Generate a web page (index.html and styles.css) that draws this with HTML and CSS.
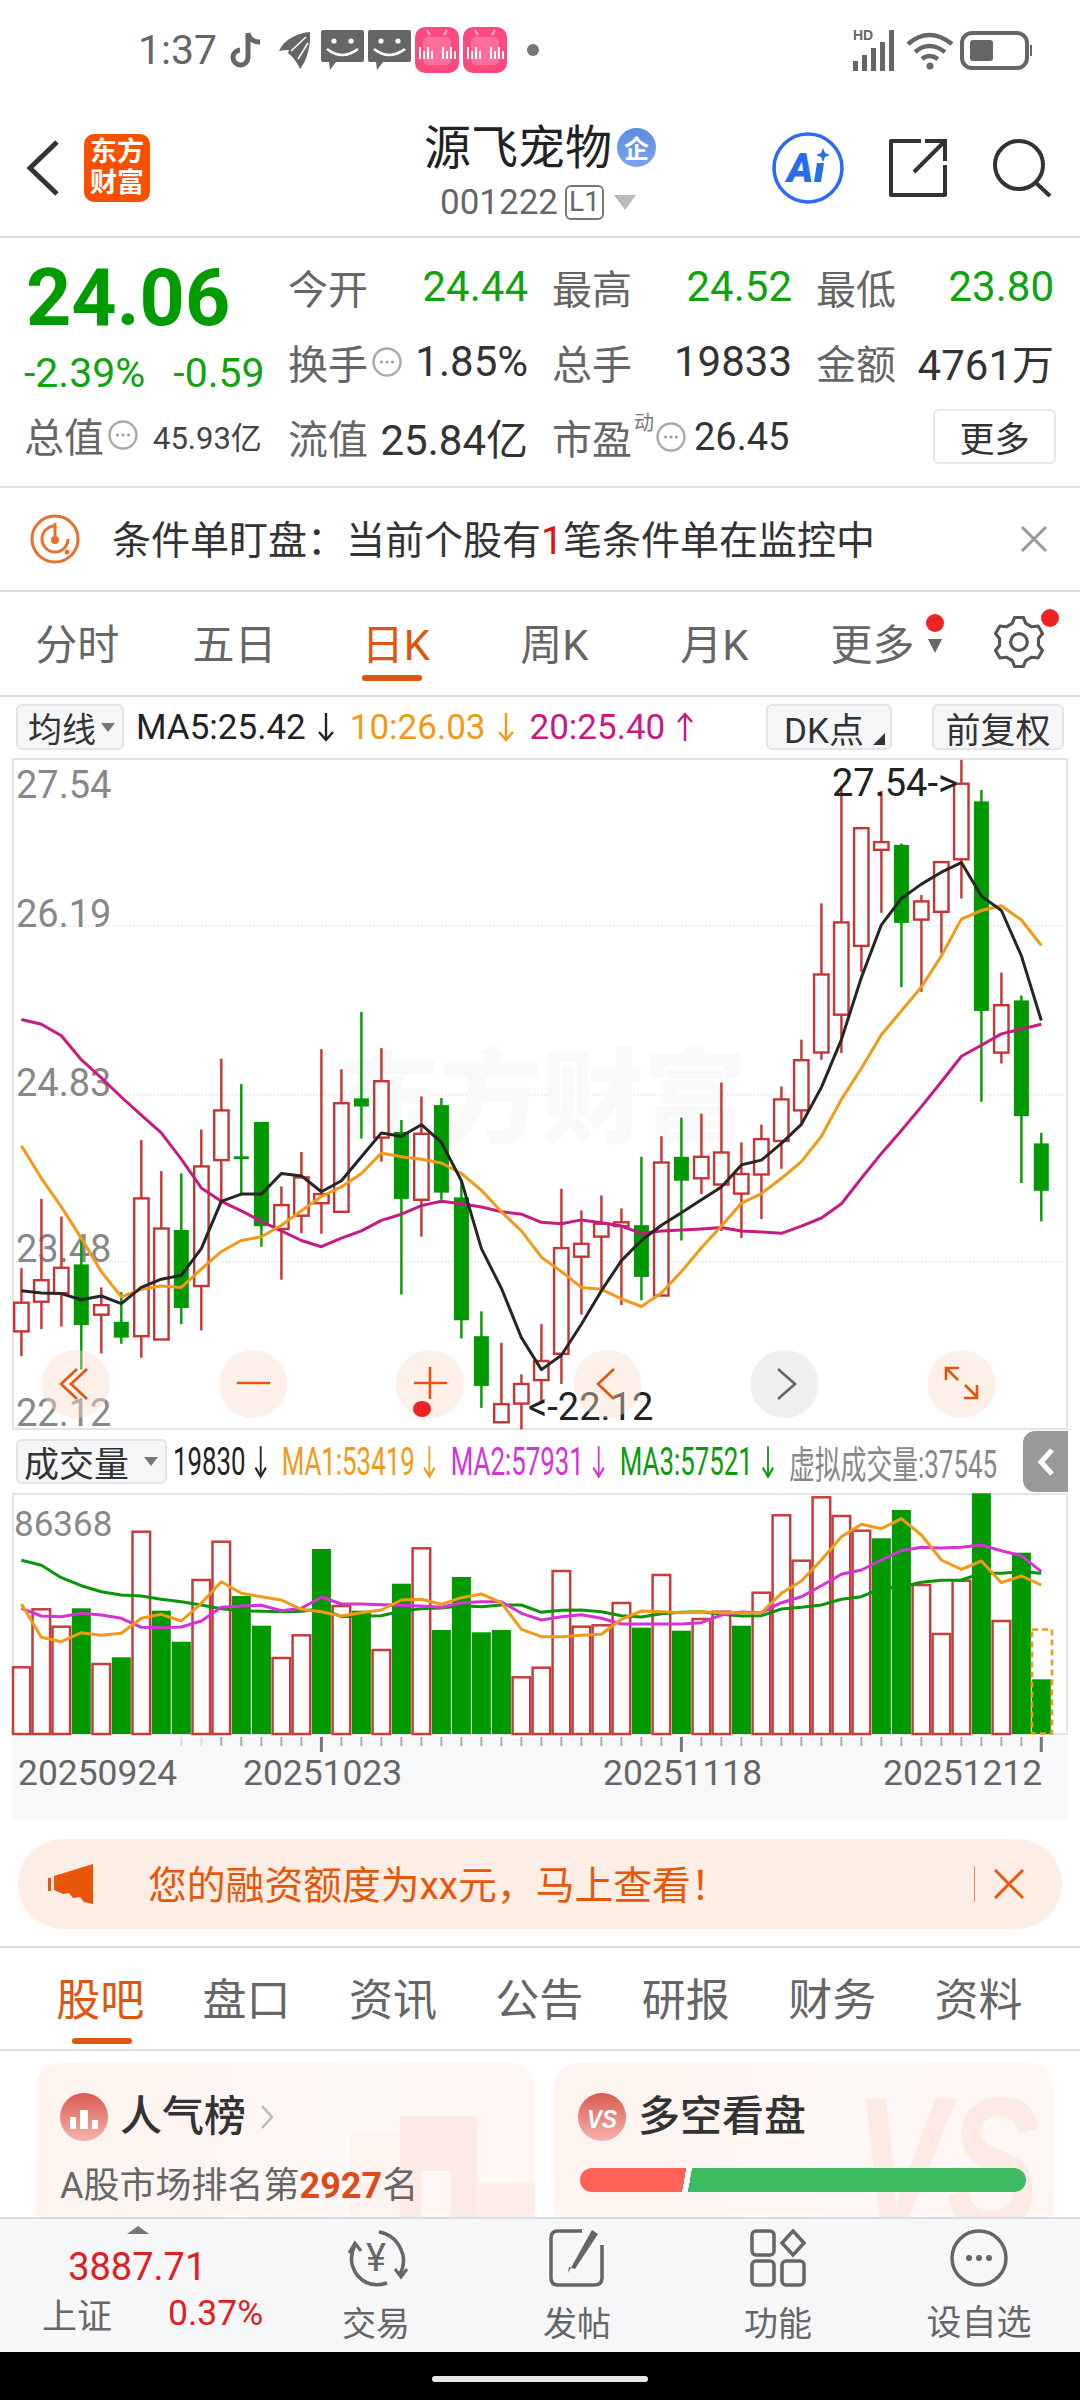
FILE: index.html
```html
<!DOCTYPE html>
<html lang="zh-CN">
<head>
<meta charset="utf-8">
<title>源飞宠物</title>
<link rel="stylesheet" href="styles.css">
</head>
<body>
<svg class="sprite" width="0" height="0">
  <symbol id="a-down" viewBox="0 0 18 30"><path d="M9 1V28M2 20L9 28L16 20" fill="none" stroke="currentColor" stroke-width="2.4"/></symbol>
  <symbol id="a-up" viewBox="0 0 18 30"><path d="M9 29V2M2 10L9 2L16 10" fill="none" stroke="currentColor" stroke-width="2.4"/></symbol>
  <symbol id="dots" viewBox="0 0 30 30"><circle cx="15" cy="15" r="13.5" fill="none" stroke="#aaa" stroke-width="2.4"/><circle cx="9.5" cy="15" r="1.5" fill="#999"/><circle cx="15" cy="15" r="1.5" fill="#999"/><circle cx="20.5" cy="15" r="1.5" fill="#999"/></symbol>
  <symbol id="bubble" viewBox="0 0 43 40"><path d="M2 0H41Q43 0 43 2V30Q43 32 41 32H15L9 40L8 32H2Q0 32 0 30V2Q0 0 2 0Z" fill="#666"/><circle cx="13" cy="11" r="2.6" fill="#fff"/><circle cx="30" cy="11" r="2.6" fill="#fff"/><path d="M6 19Q21 31 37 19" fill="none" stroke="#fff" stroke-width="2.6"/></symbol>
  <symbol id="bili" viewBox="0 0 44 46"><rect width="44" height="46" rx="10" fill="#ff4a80"/><rect x="8" y="10" width="28" height="28" rx="5" fill="#ff6f9c"/><path d="M15 8L12 3M29 8L32 3" stroke="#ffb3c9" stroke-width="2"/><path d="M4 20h2v12h-2zM8 24h2v8h-2zM12 20h2v12h-2zM16 24h2v8h-2zM27 20h2v12h-2zM31 24h2v8h-2zM35 20h2v12h-2zM39 24h2v8h-2z" fill="#fff"/></symbol>
</svg>

<div class="status">
  <span class="clock">1:37</span>
  <svg class="st-ic" width="32" height="38" viewBox="0 0 32 38"><path d="M18 2V27A7.500 7.500 0 1 1 10 19M18 2C19 8 24 11 30 11" fill="none" stroke="#666" stroke-width="5"/></svg>
  <svg class="st-ic st-feather" width="32" height="38" viewBox="0 0 32 38"><path d="M32 1C20 2 6 8 1 20C5 19 8 19 11 19L10 22C15 26 19 31 22 38C29 30 33 14 32 1Z" fill="#666"/><path d="M28 6L13 20M30 12L20 28" stroke="#fff" stroke-width="1.500"/></svg>
  <svg class="st-ic st-b1" width="43" height="40"><use href="#bubble"/></svg>
  <svg class="st-ic st-b2" width="43" height="40"><use href="#bubble"/></svg>
  <svg class="st-ic st-b2" width="44" height="46"><use href="#bili"/></svg>
  <svg class="st-ic st-b2" width="44" height="46"><use href="#bili"/></svg>
  <span class="st-dot"></span>
  <svg class="st-right" width="180" height="44" viewBox="0 0 180 44">
    <text x="1" y="12" class="hd">HD</text>
    <path d="M1 33h5v10h-5zM10 27h5v16h-5zM19 20h5v23h-5zM28 14h5v29h-5zM37 2h5v41h-5z" fill="#666"/>
    <path d="M56 16Q77 -2 100 16M63 24Q77 12 93 24M70 31Q77 25 86 31" fill="none" stroke="#666" stroke-width="4.500"/><circle cx="78" cy="38" r="3.500" fill="#666"/>
    <rect x="110" y="5" width="65" height="35" rx="10" fill="none" stroke="#666" stroke-width="4"/><rect x="118" y="12" width="23" height="21" rx="3" fill="#666"/><rect x="178" y="17" width="2" height="11" fill="#666"/>
  </svg>
</div>

<header class="header">
  <div class="h-left">
    <svg width="32" height="56" viewBox="0 0 32 56"><path d="M30 2L3 28L30 54" fill="none" stroke="#333" stroke-width="5"/></svg>
    <div class="logo">东方<br>财富</div>
  </div>
  <div class="h-title">
    <div class="t-row"><span class="t-name">源飞宠物</span><span class="badge">企</span></div>
    <div class="c-row"><span>001222</span><span class="l1">L1</span><i class="c-tri"></i></div>
  </div>
  <div class="h-right">
    <svg width="72" height="72" viewBox="0 0 72 72"><circle cx="36" cy="36" r="34" fill="none" stroke="#2b6bee" stroke-width="3.500"/><text x="15" y="50" class="ai-t">A</text><path d="M45 31H52L49 50H42Z" fill="#2b6bee"/><path d="M51 16L53 21L58 23L53 25L51 30L49 25L44 23L49 21Z" fill="#2b6bee"/></svg>
    <svg width="60" height="60" viewBox="0 0 60 60"><path d="M33 3H3V57H57V27" fill="none" stroke="#333" stroke-width="4" stroke-linejoin="round"/><path d="M26 34L57 3M37 3H57V23" fill="none" stroke="#333" stroke-width="4"/></svg>
    <svg width="60" height="60" viewBox="0 0 60 60"><circle cx="27" cy="27" r="24" fill="none" stroke="#333" stroke-width="4"/><path d="M43 44L58 58" stroke="#333" stroke-width="4"/></svg>
  </div>
</header>

<section class="quote">
  <div class="q-left">
    <div class="price">24.06</div>
    <div class="change"><span>-2.39%</span><span>-0.59</span></div>
    <div class="q-total"><span class="lb">总值</span><svg class="ic-dot" width="30" height="30"><use href="#dots"/></svg><span class="v-sm">45.93亿</span></div>
  </div>
  <div class="q-grid">
    <div class="cell"><span class="lb">今开</span><span class="val up">24.44</span></div>
    <div class="cell"><span class="lb">最高</span><span class="val up">24.52</span></div>
    <div class="cell"><span class="lb">最低</span><span class="val up">23.80</span></div>
    <div class="cell"><span class="lb">换手</span><svg class="ic-dot" width="30" height="30"><use href="#dots"/></svg><span class="val end">1.85%</span></div>
    <div class="cell"><span class="lb">总手</span><span class="val">19833</span></div>
    <div class="cell"><span class="lb">金额</span><span class="val">4761万</span></div>
    <div class="cell"><span class="lb">流值</span><span class="val">25.84亿</span></div>
    <div class="cell cell-pe"><span class="lb">市盈</span><span class="dyn">动</span><svg class="ic-dot" width="30" height="30"><use href="#dots"/></svg><span class="val-38">26.45</span></div>
    <div class="cell cell-more"><span class="more">更多</span></div>
  </div>
</section>

<section class="notice">
  <svg width="50" height="50" viewBox="0 0 50 50"><circle cx="25" cy="25" r="23" fill="none" stroke="#e8702a" stroke-width="3"/><path d="M25 12A13 13 0 1 0 38 25" fill="none" stroke="#e8702a" stroke-width="3"/><path d="M25 9V25" stroke="#e8702a" stroke-width="3"/><circle cx="25" cy="26" r="4" fill="#e8702a"/><circle cx="37" cy="38" r="2.500" fill="#e8702a"/></svg>
  <p class="n-text">条件单盯盘：当前个股有<em>1</em>笔条件单在监控中</p>
  <svg class="n-close" width="28" height="28" viewBox="0 0 28 28"><path d="M2 2L26 26M26 2L2 26" stroke="#999" stroke-width="3"/></svg>
</section>

<nav class="tabs">
  <span class="tab">分时</span><span class="tab">五日</span><span class="tab on">日K</span><span class="tab">周K</span><span class="tab">月K</span>
  <span class="tab tab-more">更多<i class="m-tri"></i><i class="r-dot"></i></span>
  <span class="tab-gear">
    <svg width="52" height="52" viewBox="0 0 50 50"><path d="M18.500 7.100L20.800 1.400H29.200L31.500 7.100L37.200 10.400L43.400 9.600L47.600 16.800L43.700 21.700V28.300L47.600 33.200L43.400 40.400L37.200 39.600L31.500 42.900L29.200 48.600H20.800L18.500 42.900L12.800 39.600L6.600 40.400L2.400 33.200L6.300 28.300V21.700L2.400 16.800L6.600 9.600L12.800 10.400Z" fill="none" stroke="#555" stroke-width="3" stroke-linejoin="round"/><circle cx="25" cy="25" r="8" fill="none" stroke="#555" stroke-width="3"/></svg>
    <i class="r-dot"></i>
  </span>
</nav>

<div class="bar-ma">
  <span class="chip chip-ma">均线<i class="tri"></i></span>
  <div class="ma-legend">
    <span class="k">MA5:25.42</span><svg class="k arr" width="18" height="30"><use href="#a-down"/></svg>
    <span class="o">10:26.03</span><svg class="o arr" width="18" height="30"><use href="#a-down"/></svg>
    <span class="m">20:25.40</span><svg class="m arr" width="18" height="30"><use href="#a-up"/></svg>
  </div>
  <span class="chip chip-dk">DK点<i class="corner"></i></span>
  <span class="chip chip-fq">前复权</span>
</div>

<svg id="kline" class="chart-k" width="1080" height="672" viewBox="0 758 1080 672"></svg>

<div class="bar-vol">
  <span class="chip chip-vol">成交量<i class="tri"></i></span>
  <div class="vol-legend">
    <span class="k">19830</span><svg class="k" width="20" height="34" viewBox="0 0 18 30" preserveAspectRatio="none"><use href="#a-down"/></svg>
    <span class="o s">MA1:53419</span><svg class="o" width="20" height="34" viewBox="0 0 18 30" preserveAspectRatio="none"><use href="#a-down"/></svg>
    <span class="p s">MA2:57931</span><svg class="p" width="20" height="34" viewBox="0 0 18 30" preserveAspectRatio="none"><use href="#a-down"/></svg>
    <span class="g s">MA3:57521</span><svg class="g" width="20" height="34" viewBox="0 0 18 30" preserveAspectRatio="none"><use href="#a-down"/></svg>
    <span class="y s">虚拟成交量:37545</span>
  </div>
  <span class="side-tab"><svg width="18" height="30" viewBox="0 0 18 30"><path d="M15 3L4 15L15 27" fill="none" stroke="#fff" stroke-width="5"/></svg></span>
</div>

<svg id="volume" class="chart-v" width="1080" height="328" viewBox="0 1493 1080 328"></svg>

<section class="promo-wrap">
  <div class="promo">
    <svg width="46" height="40" viewBox="0 0 46 40"><path d="M0 14H3V27H0ZM6 12L45 0V40L36 38L32 33L25 34L21 29L15 30L6 26Z" fill="#e8560a"/></svg>
    <p class="p-text">您的融资额度为xx元，马上查看！</p>
    <i class="p-sep"></i>
    <svg width="32" height="32" viewBox="0 0 32 32"><path d="M2 2L30 30M30 2L2 30" stroke="#e8560a" stroke-width="3"/></svg>
  </div>
</section>

<nav class="subtabs">
  <span class="sub on">股吧</span><span class="sub">盘口</span><span class="sub">资讯</span><span class="sub">公告</span><span class="sub">研报</span><span class="sub">财务</span><span class="sub">资料</span>
</nav>

<section class="cards">
  <article class="card">
    <svg class="wm" width="499" height="170" viewBox="0 0 499 170"><path d="M290 0H499V170H290Z" fill="#fff" opacity=".25"/><path d="M364 53H441V170H364Z" fill="#fbe6df" opacity=".75"/><path d="M314 70H364V170H314Z" fill="#fef3ef"/><path d="M441 120H499V170H441Z" fill="#fbe6df" opacity=".6"/><path d="M385 108H415V170H385Z" fill="#fff" opacity=".6"/></svg>
    <div class="c-head">
      <svg width="48" height="48" viewBox="0 0 48 48"><defs><linearGradient id="gr" x1="0" y1="0" x2="0" y2="1"><stop offset="0" stop-color="#d95a50"/><stop offset="1" stop-color="#f4b3ab"/></linearGradient></defs><circle cx="24" cy="24" r="24" fill="url(#gr)"/><path d="M10 24h6v12h-6zM20 17h8v19h-8zM32 27h6v9h-6z" fill="#fff"/></svg>
      <h3>人气榜</h3>
      <svg class="c-arrow" width="14" height="24" viewBox="0 0 14 24"><path d="M2 1L12 12L2 23" fill="none" stroke="#bbb" stroke-width="2.500"/></svg>
    </div>
    <p class="rank">A股市场排名第<b>2927</b>名</p>
  </article>
  <article class="card">
    <svg class="wm" width="498" height="170" viewBox="0 0 498 170"><path d="M256 0H498V170H256Z" fill="#fff" opacity=".25"/><text x="300" y="166" class="wm-vs" textLength="186" lengthAdjust="spacingAndGlyphs">VS</text></svg>
    <div class="c-head">
      <svg width="48" height="48" viewBox="0 0 48 48"><circle cx="24" cy="24" r="24" fill="url(#gr)"/><text x="9" y="35" class="vs-t" textLength="30" lengthAdjust="spacingAndGlyphs">VS</text></svg>
      <h3>多空看盘</h3>
    </div>
    <div class="ls-bar"></div>
  </article>
</section>

<footer class="nav">
  <div class="idx">
    <i class="idx-tri"></i>
    <div class="idx-val">3887.71</div>
    <div class="idx-row"><span class="idx-name">上证</span><span class="idx-pct">0.37%</span></div>
  </div>
  <div class="nav-item">
    <svg width="66" height="58" viewBox="0 0 66 58"><path d="M12 16Q4 32 14 46Q26 60 44 54M36 3Q54 6 60 26Q62 38 56 46" fill="none" stroke="#666" stroke-width="3.500"/><path d="M6 24L12 14L18 22M52 40L58 48L64 40" fill="none" stroke="#666" stroke-width="3"/><text x="33" y="42" class="yen">¥</text></svg>
    <span>交易</span>
  </div>
  <div class="nav-item">
    <svg width="58" height="58" viewBox="0 0 58 58"><path d="M34 2H10Q3 2 3 9V49Q3 56 10 56H46Q54 56 54 49V16" fill="none" stroke="#666" stroke-width="3.500"/><path d="M50 1L56 5L33 40L27 38L26 44Z" fill="#666" transform="translate(-6 0)"/></svg>
    <span>发帖</span>
  </div>
  <div class="nav-item">
    <svg width="56" height="58" viewBox="0 0 56 58"><rect x="2" y="2" width="22" height="24" rx="4" fill="none" stroke="#666" stroke-width="3.500"/><rect x="2" y="32" width="22" height="24" rx="4" fill="none" stroke="#666" stroke-width="3.500"/><rect x="32" y="32" width="22" height="24" rx="4" fill="none" stroke="#666" stroke-width="3.500"/><path d="M43 2L54 14L43 26L32 14Z" fill="none" stroke="#666" stroke-width="3.500"/></svg>
    <span>功能</span>
  </div>
  <div class="nav-item">
    <svg width="58" height="58" viewBox="0 0 58 58"><circle cx="29" cy="29" r="27" fill="none" stroke="#666" stroke-width="3.500"/><circle cx="19" cy="29" r="3" fill="#666"/><circle cx="29" cy="29" r="3" fill="#666"/><circle cx="39" cy="29" r="3" fill="#666"/></svg>
    <span class="nav-long">设自选</span>
  </div>
</footer>
<div class="home"><i></i></div>
<script src="chart.js"></script>
</body>
</html>
```
FILE: styles.css
```css
* { box-sizing: border-box; }
html, body { margin: 0; padding: 0; }
body {
  width: 1080px; height: 2400px; overflow: hidden; background: #fff; color: #333;
  font-family: Roboto, "Noto Sans CJK SC", sans-serif;
}
p, h3 { margin: 0; }
i, em { font-style: normal; }
.sprite { position: absolute; }
.hd { font: 700 14px "Liberation Sans", sans-serif; fill: #666; }

.status { height: 100px; display: flex; align-items: center; padding-left: 138px; }
.clock { font-size: 41px; color: #666; width: 92px; }
.st-feather { margin-left: 16px; }
.st-b1 { margin-left: 11px; }
.st-b2 { margin-left: 4px; }
.st-dot { width: 12px; height: 12px; border-radius: 50%; background: #777; margin-left: 20px; }
.st-right { margin-left: auto; margin-right: 48px; }

.header {
  height: 138px; border-bottom: 2px solid #ddd;
  display: grid; grid-template-columns: 1fr auto 1fr; align-items: center;
}
.h-left { display: flex; align-items: center; padding-left: 27px; gap: 25px; }
.logo {
  width: 66px; height: 68px; border-radius: 10px; background: #f95000; color: #fff;
  font-size: 27px; font-weight: 700; line-height: 31px; text-align: center; padding-top: 3px;
}
.h-title { display: flex; flex-direction: column; align-items: center; padding-top: 4px; }
.t-row { display: flex; align-items: center; gap: 5px; height: 62px; }
.t-name { font-size: 47px; color: #222; padding-bottom: 8px; }
.badge {
  width: 39px; height: 39px; border-radius: 50%; color: #fff; font-size: 25px; font-weight: 700;
  background: linear-gradient(#5b8dde, #7ba4ec); display: flex; align-items: center; justify-content: center;
}
.c-row { display: flex; align-items: center; height: 46px; font-size: 35px; color: #666; margin: 0 4px 0 0; padding-top: 2px; }
.l1 {
  font-size: 28px; width: 39px; height: 35px; border: 2px solid #777; border-radius: 6px;
  margin-left: 7px; display: flex; align-items: center; justify-content: center; line-height: 1;
}
.c-tri { width: 0; height: 0; margin-left: 10px; border: 11px solid transparent; border-top: 15px solid #bbb; border-bottom: 0; }
.h-right { display: flex; align-items: center; justify-content: flex-end; padding-right: 28px; gap: 44px; }

.quote { height: 250px; border-bottom: 2px solid #e4e4e4; display: flex; }
.q-left { width: 288px; padding: 15px 0 0 24px; flex: none; }
.price { height: 90px; line-height: 90px; font-size: 79px; font-weight: 700; color: #009b00; padding-left: 2px; }
.change { height: 60px; display: flex; align-items: center; gap: 28px; font-size: 41px; color: #0fa30f; }
.q-total { height: 64px; display: flex; align-items: center; white-space: nowrap; }
.v-sm { font-size: 31px; margin-left: 15px; color: #444; }
.lb { font-size: 40px; color: #666; white-space: nowrap; flex: none; }
.ic-dot { margin-left: 4px; flex: none; }
.q-grid {
  padding-top: 11px; display: grid; grid-template-columns: 240px 240px 238px; column-gap: 24px;
  grid-auto-rows: 75px;
}
.cell { display: flex; align-items: center; justify-content: space-between; white-space: nowrap; }
.val { font-size: 42px; color: #333; }
.val.up { color: #0fa30f; }
.val.end { margin-left: auto; }
.cell-pe { justify-content: flex-start; }
.dyn { font-size: 20px; color: #777; align-self: flex-start; margin-top: 8px; margin-left: 2px; flex: none; }
.cell-pe .ic-dot { margin-left: 2px; }
.val-38 { font-size: 38px; margin-left: 8px; color: #333; }
.cell-more { justify-content: flex-end; }
.more {
  width: 123px; height: 55px; border: 2px solid #e6e6e6; border-radius: 6px; font-size: 35px; color: #333;
  display: flex; align-items: center; justify-content: center; margin-right: -2px;
}

.notice { height: 104px; border-bottom: 2px solid #ddd; display: flex; align-items: center; padding: 0 32px 0 30px; }
.n-text { margin: 0 0 5px 32px; font-size: 39px; color: #333; white-space: nowrap; }
.n-text em { color: #e01010; font-family: Roboto, sans-serif; }
.n-close { margin-left: auto; }

.tabs { height: 105px; border-bottom: 2px solid #ddd; display: grid; grid-template-columns: 154.5px repeat(4, 160px) 165px 1fr; align-items: center; padding-bottom: 4px; }
.tab { font-size: 42px; color: #666; justify-self: center; position: relative; }
.tab.on { color: #e0560e; margin-left: 3px; }
.tab.on::after { content: ""; position: absolute; left: 0; bottom: -9px; width: 60px; height: 6px; border-radius: 3px; background: #e0560e; }
.tab-more { display: flex; align-items: center; padding-right: 4px; margin-left: 22px; }
.m-tri { width: 0; height: 0; margin: 8px 0 0 13px; border: 7px solid transparent; border-top: 14px solid #666; border-bottom: 0; }
.r-dot { position: absolute; width: 18px; height: 18px; border-radius: 50%; background: #ee2222; }
.tab-more .r-dot { right: 2px; top: 3px; }
.tab-gear { position: relative; display: flex; padding-left: 33.5px; }
.tab-gear .r-dot { left: 81px; top: -7px; }

.bar-ma { height: 61px; display: flex; align-items: flex-start; padding: 7px 16px 0; }
.chip {
  height: 46px; background: #f5f6f8; border: 2px solid #e3e4e8; border-radius: 6px;
  display: flex; align-items: center; font-size: 34px; color: #333; position: relative; flex: none;
}
.chip-ma { width: 108px; padding-left: 10px; }
.tri { width: 0; height: 0; margin-left: 5px; border: 7px solid transparent; border-top: 9px solid #777; border-bottom: 0; }
.chip-dk { width: 126px; padding-left: 16px; margin-left: auto; font-size: 35px; }
.corner { position: absolute; right: 5px; bottom: 3px; width: 0; height: 0; border: 6px solid transparent; border-right-color: #333; border-bottom-color: #333; }
.chip-fq { width: 132px; margin-left: 40px; font-size: 35px; justify-content: center; }
.ma-legend { display: flex; align-items: center; height: 46px; margin-left: 12px; font-size: 35px; white-space: nowrap; }
.ma-legend svg { margin: 0 15px 0 11px; }
.k { color: #222; } .o { color: #f29a16; } .m { color: #c71a82; } .p { color: #d633d6; } .g { color: #0a9a0a; } .y { color: #888; }
.chart-k, .chart-v { display: block; }
.ax { font: 400 38px Roboto, sans-serif; fill: #888; }
.ann { font: 400 38px Roboto, sans-serif; fill: #222; }
.ax-v { font: 400 35px Roboto, sans-serif; fill: #888; }
.dt { font: 400 35.4px Roboto, sans-serif; fill: #666; }
.wmark { font: 900 102px "Noto Sans CJK SC", sans-serif; fill: #f9f9f9; }

.bar-vol { height: 63px; display: flex; align-items: center; padding-left: 16px; position: relative; }
.chip-vol { width: 151px; height: 45px; padding-left: 6px; font-size: 35px; }
.chip-vol .tri { margin-left: 15px; }
.vol-legend {
  flex: none; margin-left: 6px; display: flex; align-items: center; gap: 12px; font-size: 38px; white-space: nowrap;
  transform: scaleX(.68); transform-origin: left center;
}
.vol-legend .s { margin-left: 9px; }
.side-tab {
  position: absolute; right: 12px; top: 1px; width: 45px; height: 61px; background: #999; border-radius: 12px 0 0 12px;
  display: flex; align-items: center; justify-content: center;
}

.promo-wrap { height: 127px; padding: 18px 18px 0; border-bottom: 2px solid #ddd; }
.promo { height: 90px; border-radius: 45px; background: #fdeee5; display: flex; align-items: center; padding-left: 30px; }
.p-text { margin: 0 0 5px 54px; font-size: 38.8px; color: #e8560a; white-space: nowrap; width: 826px; }
.p-sep { width: 1px; height: 36px; background: #d88a5e; margin-right: 18px; }

.subtabs { height: 103px; border-bottom: 2px solid #ddd; padding: 0 31px 4px 27px; display: grid; grid-template-columns: repeat(7, 146.4px); align-items: center; justify-items: center; }
.sub { font-size: 44px; color: #666; position: relative; }
.sub.on { color: #e0560e; }
.sub.on::after { content: ""; position: absolute; left: 16px; bottom: -15px; width: 60px; height: 6px; border-radius: 3px; background: #e0560e; }

.cards { height: 166px; overflow: hidden; padding: 12px 28px 0 36px; display: flex; gap: 19px; }
.card {
  flex: none; width: 499px; height: 220px; border-radius: 24px; position: relative; overflow: hidden;
  padding: 30px 24px 0; background: linear-gradient(100deg, #fef3ef, #fef7f4 55%, #fff3ef);
}
.wm { position: absolute; left: 0; top: 0; }
.wm-vs { font: italic 900 190px "Liberation Sans", sans-serif; fill: #fdeae4; }
.vs-t { font: italic 700 26px "Liberation Sans", sans-serif; fill: #fff; }
.c-head { display: flex; align-items: center; position: relative; }
.c-head h3 { font-size: 42px; font-weight: 500; color: #333; margin-left: 12px; line-height: 48px; }
.c-arrow { margin-left: 14px; }
.rank { position: relative; margin-top: 20px; font-size: 36px; color: #666; white-space: nowrap; line-height: 50px; }
.rank b { color: #e04a1a; font-weight: 700; }
.ls-bar {
  position: relative; margin: 27px 3px 0 2px; height: 24px; border-radius: 12px;
  background: linear-gradient(100deg, #ff6358 0 23.6%, #fff 23.6% 24.9%, #3cbb60 24.9%);
}

.nav { height: 135px; background: #f6f7f9; border-top: 2px solid #ddd; display: flex; }
.idx { width: 275.5px; position: relative; }
.idx-tri { position: absolute; left: 127px; top: 7px; width: 0; height: 0; border: 11px solid transparent; border-bottom: 8px solid #777; border-top: 0; }
.idx-val { padding-top: 26px; text-align: center; font-size: 38px; line-height: 44px; color: #e02020; margin-right: 1px; }
.idx-row { display: flex; padding-left: 42px; gap: 56px; align-items: center; height: 52px; margin-top: -2px; }
.idx-name { font-size: 35px; color: #666; }
.idx-pct { font-size: 35.5px; color: #e02020; }
.nav-item { width: 201px; display: flex; flex-direction: column; align-items: center; padding-top: 10px; }
.nav-item span { font-size: 34px; color: #666; line-height: 44px; margin-top: 15px; }
.nav-item .nav-long { font-size: 35px; }
.yen { font: 400 38px Roboto, sans-serif; fill: #666; text-anchor: middle; }
.ai-t { font: italic 900 40px Roboto, sans-serif; fill: #2b6bee; }
.home { height: 48px; background: #000; display: flex; justify-content: center; padding-top: 24px; }
.home i { width: 216px; height: 6px; border-radius: 3px; background: #e6e6e6; }
```
FILE: chart.js
```js
// Daily candles: [colour, wick top, body top, body bottom, wick bottom]
var candles = [
  ['r',1188,1260,1320,1372],['r',1043,1213,1258,1315],['r',1080,1187,1240,1310],['g',1130,1180,1307,1400],
  ['r',1228,1265,1285,1366],['g',1238,1300,1333,1346],['r',920,1042,1330,1375],['r',985,1105,1337,1337],
  ['g',990,1108,1271,1305],['r',898,975,1225,1318],['r',750,858,962,1050],['g',803,954,960,1033],
  ['g',882,882,1100,1143],['r',1017,1056,1106,1212],['r',945,998,1078,1115],['r',730,1033,1052,1116],
  ['r',772,843,1070,1072],['g',652,833,850,917],['r',728,797,915,965],['g',878,903,1043,1243],
  ['r',829,907,1045,1122],['g',832,847,1030,1045],['g',1003,1040,1297,1335],['g',1278,1330,1434,1480],
  ['r',1344,1472,1510,1512],['r',1410,1430,1471,1525],['r',1305,1382,1422,1470],['r',1022,1146,1367,1430],
  ['r',1067,1137,1164,1285],['r',1036,1095,1122,1235],['r',1063,1092,1100,1265],['g',955,1098,1206,1255],
  ['r',912,967,1245,1245],['g',873,955,1005,1130],['r',865,955,1000,1033],['r',800,946,1013,1110],
  ['r',925,991,1032,1125],['r',888,918,992,1085],['r',808,835,922,980],['r',710,753,858,885],
  ['r',425,574,737,752],['r',180,465,658,738],['r',265,268,514,568],['r',190,297,313,445],
  ['g',300,303,466,600],['r',408,421,459,610],['r',338,339,443,530],['r',125,175,333,415],
  ['g',188,212,650,840],['r',570,638,737,760],['g',618,628,870,1010],['g',905,927,1026,1090]
];
var ma5 = [1235,1240,1241,1254,1246,1262,1228,1211,1203,1147,1048,1033,1033,990,995,1028,1005,955,905,912,888,925,1005,1147,1230,1333,1400,1370,1305,1235,1172,1130,1098,1072,1045,1018,972,962,927,887,810,710,580,470,415,385,360,340,410,440,535,670];
var ma10 = [932,1000,1060,1125,1195,1248,1232,1225,1228,1190,1153,1130,1122,1098,1068,1038,1018,990,947,955,960,968,990,1025,1070,1110,1165,1195,1228,1232,1252,1268,1240,1195,1145,1100,1052,1032,1000,965,912,835,770,700,650,600,535,458,440,430,460,513];
var ma20 = [668,678,702,752,790,830,868,905,960,1020,1048,1068,1090,1110,1130,1143,1125,1110,1088,1075,1057,1048,1053,1060,1070,1075,1092,1095,1087,1093,1100,1115,1110,1108,1106,1103,1110,1112,1115,1100,1083,1053,1000,948,900,850,798,745,722,698,688,678];

// Volume bars: top edge, colour comes from the list below
var vols = [742,568,620,565,732,712,335,572,665,480,365,528,617,714,646,387,558,572,690,491,385,630,471,637,630,772,743,453,620,616,549,623,465,632,597,575,617,518,286,422,232,288,332,355,270,495,642,482,220,603,398,778];
var volColor = 'rrrgrgrggrrggrrgrgrgrggggrrrrrrgrgrrgrrrrrrggrrrgrgg';
var vma1 = [552,652,665,638,646,640,595,583,603,550,485,520,530,540,568,575,588,578,570,540,538,553,533,522,548,628,650,650,646,643,598,573,575,578,575,578,578,578,520,483,420,350,313,326,296,345,420,448,423,488,468,495];
var vma2 = [565,588,590,580,585,595,622,623,621,603,562,558,556,572,565,531,552,552,554,556,558,562,548,545,545,580,600,590,584,595,612,612,612,612,608,585,576,578,548,530,497,463,450,420,392,382,384,382,375,392,407,455];
var vma3 = [421,436,473,497,515,525,528,538,545,555,566,572,574,575,574,566,590,588,587,573,566,564,557,560,555,555,577,571,570,575,587,591,581,577,575,583,588,587,567,562,555,538,530,505,500,487,481,480,460,460,455,460];

var RED = '#c63434', GREEN = '#009900';
function cx(i) { return 21.35 + 20 * i; }
function ky(z) { return 700 + z / 2.0907; }
function vy(z) { return 1420 + z / 3; }
function f(n) { return n.toFixed(1); }
function line(arr, conv, col, w) {
  var pts = arr.map(function (z, i) { return f(cx(i)) + ',' + f(conv(z)); }).join(' ');
  return '<polyline points="' + pts + '" fill="none" stroke="' + col + '" stroke-width="' + w + '" stroke-linejoin="round"/>';
}

function drawKline() {
  var s = '<rect x="13" y="759" width="1054" height="670" fill="#fff" stroke="#e4e4e4" stroke-width="2"/>';
  [926, 1095, 1262].forEach(function (y) {
    s += '<path d="M13 ' + y + 'H1067" stroke="#ccc" stroke-width="1" stroke-dasharray="1 2"/>';
  });
  s += '<text x="338" y="1135" class="wmark">东方财富</text>';
  [['27.54', 798], ['26.19', 927], ['24.83', 1096], ['23.48', 1262], ['22.12', 1426]].forEach(function (l) {
    s += '<text x="16" y="' + l[1] + '" class="ax">' + l[0] + '</text>';
  });
  candles.forEach(function (c, i) {
    var x = cx(i), col = c[0] === 'r' ? RED : GREEN;
    s += '<path d="M' + f(x) + ' ' + f(Math.max(ky(c[1]), 759)) + 'V' + f(ky(c[4])) + '" stroke="' + col + '" stroke-width="2.4"/>';
    if (c[0] === 'r') {
      s += '<rect x="' + f(x - 7.2) + '" y="' + f(ky(c[2])) + '" width="14.4" height="' + f(ky(c[3]) - ky(c[2])) + '" fill="#fff" stroke="' + col + '" stroke-width="2.4"/>';
    } else {
      s += '<rect x="' + f(x - 7.5) + '" y="' + f(ky(c[2])) + '" width="15" height="' + f(ky(c[3]) - ky(c[2])) + '" fill="' + col + '"/>';
    }
  });
  s += line(ma20, ky, '#c71a82', 3) + line(ma10, ky, '#f29a16', 3) + line(ma5, ky, '#262626', 3);
  s += '<text x="832" y="796" class="ann">27.54-&gt;</text><text x="528" y="1420" class="ann">&lt;-22.12</text>';
  var OR = '#e0560e';
  [76, 253, 430, 607.5, 961.5].forEach(function (x) {
    s += '<circle cx="' + x + '" cy="1384" r="34" fill="#f8dccb" opacity=".42"/>';
  });
  s += '<circle cx="784.5" cy="1384" r="34" fill="#d9d9d9" opacity=".42"/>';
  var g = 'fill="none" stroke-width="2.6"';
  s += '<path d="M77 1369L61 1384L77 1399M87 1369L71 1384L87 1399" stroke="' + OR + '" ' + g + '/>';
  s += '<path d="M237 1383H270" stroke="' + OR + '" ' + g + '/>';
  s += '<path d="M414 1383H447M430 1367V1399" stroke="' + OR + '" ' + g + '/>';
  s += '<path d="M614 1369L598 1384L614 1399" stroke="' + OR + '" ' + g + '/>';
  s += '<path d="M778 1369L795 1384L778 1399" stroke="#666" ' + g + '/>';
  s += '<path d="M946 1380V1368H959M946 1368L958 1380M965 1385L977 1397M977 1385V1398H964" stroke="' + OR + '" ' + g + '/>';
  s += '<ellipse cx="422" cy="1409" rx="9" ry="8" fill="#ee2222"/>';
  document.getElementById('kline').innerHTML = s;
}

function drawVolume() {
  var s = '<rect x="13" y="1494" width="1054" height="240" fill="#fff" stroke="#e4e4e4" stroke-width="2"/>';
  s += '<text x="14" y="1536" class="ax-v">86368</text>';
  var base = 1734;
  vols.forEach(function (z, i) {
    var x = cx(i), t = vy(z);
    if (volColor[i] === 'g') {
      s += '<rect x="' + f(x - 9.5) + '" y="' + f(t) + '" width="19" height="' + f(base - t) + '" fill="' + GREEN + '"/>';
    } else {
      var l = Math.max(x - 8.8, 13);
      s += '<rect x="' + f(l) + '" y="' + f(t) + '" width="' + f(x + 8.8 - l) + '" height="' + f(base - t) + '" fill="#fff" stroke="#c83c3c" stroke-width="2.5"/>';
    }
  });
  s += line(vma3, vy, '#0a950a', 3) + line(vma2, vy, '#d633d6', 3) + line(vma1, vy, '#f29a16', 3);
  s += '<rect x="1032" y="1629.5" width="20" height="104" fill="none" stroke="#f29a16" stroke-width="2.5" stroke-dasharray="6 4"/>';
  s += '<rect x="12" y="1736" width="1056" height="85" fill="#f7f8fa"/>';
  for (var i = 8; i < 52; i++) {
    var major = i === 15 || i === 33 || i === 51;
    s += '<path d="M' + f(cx(i)) + ' 1737V' + (major ? 1752 : 1746) + '" stroke="' + (major ? '#777' : (i < 10 ? '#ddd' : '#aaa')) + '" stroke-width="' + (major ? 3 : 2) + '"/>';
  }
  [['20250924', 18], ['20251023', 243], ['20251118', 603], ['20251212', 883]].forEach(function (d) {
    s += '<text x="' + d[1] + '" y="1785" class="dt">' + d[0] + '</text>';
  });
  document.getElementById('volume').innerHTML = s;
}

drawKline();
drawVolume();
```
